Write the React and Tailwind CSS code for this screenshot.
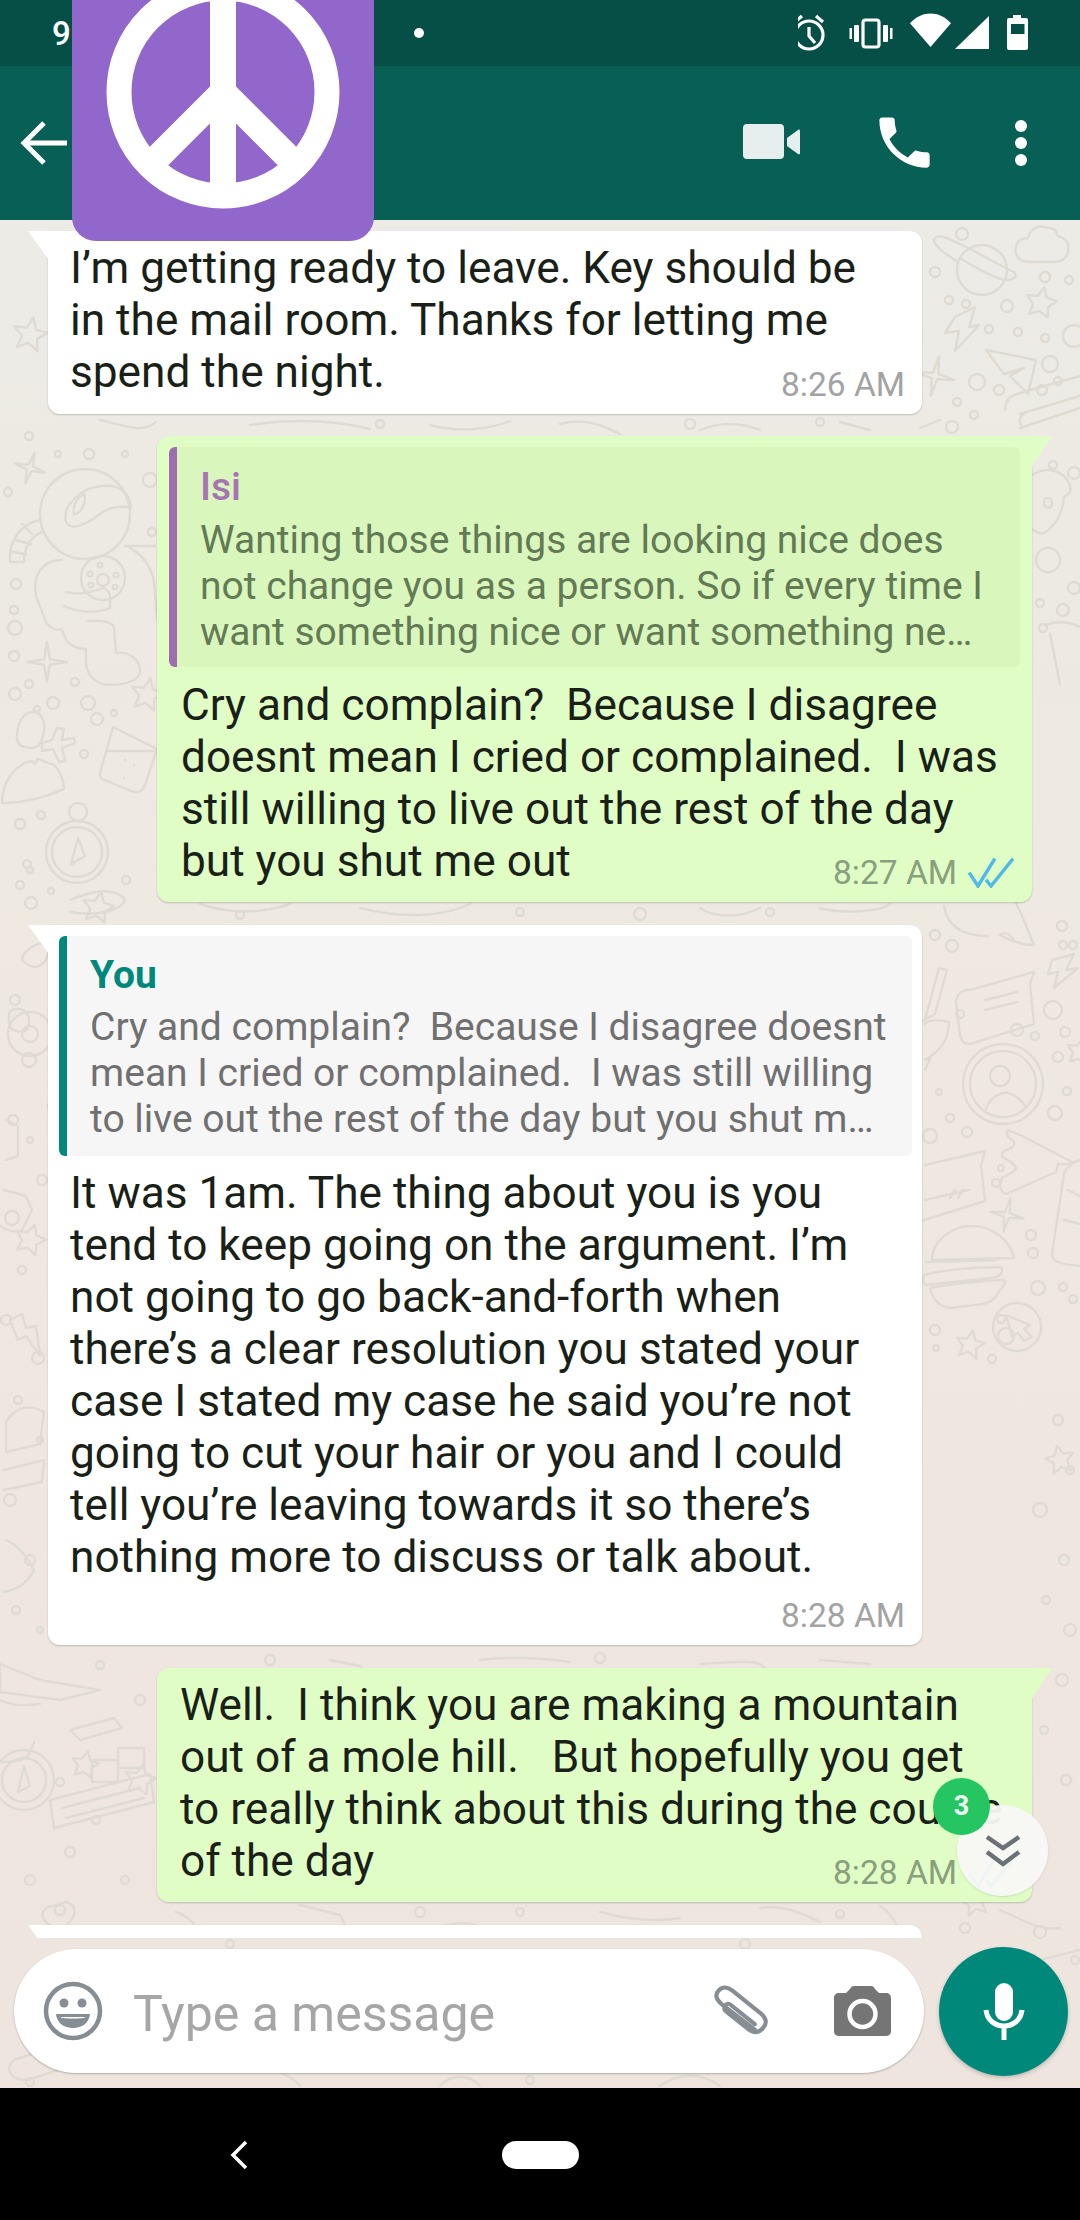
import React from "react";

const starPts = (cx, cy, R, r, n, rot = 0) => {
  const p = [];
  for (let i = 0; i < n * 2; i++) {
    const a = rot + (Math.PI * i) / n - Math.PI / 2;
    const q = i % 2 ? r : R;
    p.push(`${(cx + q * Math.cos(a)).toFixed(1)},${(cy + q * Math.sin(a)).toFixed(1)}`);
  }
  return p.join(" ");
};

const dots = [
  [29,436,4],[58,454,3],[89,454,5],[125,454,3],[8,492,4],[150,480,7],[152,532,4],[16,584,5],[14,610,4],[15,628,7],[14,656,5],
  [29,684,4],[15,694,6],[75,682,4],[53,703,6],[37,709,3],[88,703,7],[97,719,6],[114,713,3],[84,754,4],[20,824,5],[41,815,4],[27,864,4],[30,870,3],[20,885,4],[51,891,3],[31,903,6],[126,880,4],
  [935,272,5],[962,234,6],[1045,277,5],[1069,280,4],[949,300,4],[966,304,4],[1007,306,6],[989,329,4],[1018,332,4],[1045,338,4],[1074,336,11],[977,382,8],[999,390,5],[1050,364,8],[1058,381,4],[1042,390,5],[957,402,4],[974,415,4],[952,427,6],
  [1053,465,4],[1074,473,6],[1074,588,6],[1040,603,4],[1063,610,6],[1043,628,4],
  [935,935,5],[952,946,6],[1062,926,5],[1073,945,4],[1063,945,4],[960,1014,4],[1053,1010,9],[1017,1030,6],[1035,1036,4],[1065,1032,5],[1058,1057,5],[1067,1091,4],[1055,1113,7],[930,1136,7],[939,1092,3],[950,1118,4],[967,1132,5],[1001,1168,3],[996,1183,4],
  [1031,1235,5],[1033,1253,5],[1038,1288,7],[1063,1287,4],[1073,1299,4],[935,1330,5],[936,1348,3],[1001,1319,4],[1006,1336,8],[992,1359,4],
  [15,1000,5],[29,1060,7],[52,1106,4],[13,1120,5],[30,1140,3],[42,1180,5],[12,1218,7],[22,1270,4],[6,1320,5],[38,1358,6],[18,1400,4],[40,1440,3],[10,1500,6],[30,1560,5],[16,1610,4],[40,1630,3],
  [1058,1420,5],[1070,1470,4],[1040,1510,7],[1064,1560,5],[1046,1600,4],[1070,1630,6],[1062,1680,6],[1044,1730,4],[1066,1780,5],
  [100,1665,4],[270,1660,5],[420,1912,5],[600,1658,5],[840,1914,4],[520,1912,4],[60,1910,5],[140,1700,5],[60,1782,4],[96,1820,4],[70,1852,5],[30,1880,5],[125,1880,4],
  [380,424,4],[690,424,5],[820,422,4],[240,915,4],[520,912,4],[640,914,6],[770,912,4],[1040,1932,6],[965,1928,5],[1075,1960,4],[1042,2035,4],[30,2082,4],[530,2080,4],[230,1944,4],[745,1944,5],
];

function Doodles() {
  return (
    <svg className="absolute left-0 top-0" width="1080" height="1868" viewBox="0 220 1080 1868" fill="none" stroke="#dfdbd3" strokeWidth="2.4" strokeLinejoin="round" strokeLinecap="round">
      {dots.map(([x, y, r], i) => <circle key={i} cx={x} cy={y} r={r} />)}
      {/* astronaut */}
      <circle cx="85" cy="514" r="45" />
      <path d="M66 522c-4-16 14-34 36-36 16-2 28 6 29 22-12-3-24 0-34 8-9 7-26 16-31 6z" />
      <path d="M74 514c-2-8 4-18 10-20 3 8-3 20-10 20z" />
      <path d="M40 520c-20 4-32 22-30 42l14 0c0-16 8-26 18-30M15 540l16 4M12 552l14 2M22 524l10 10" />
      <circle cx="103" cy="578" r="22" />
      <circle cx="103" cy="580" r="6" /><circle cx="90" cy="574" r="2.4" /><circle cx="100" cy="565" r="2.4" /><circle cx="116" cy="575" r="2.4" /><circle cx="115" cy="587" r="2.4" /><circle cx="91" cy="585" r="2.4" />
      <path d="M62 560c-20 0-30 16-26 36l10 26c4 6 10 9 16 7 4 20 20 20 24 20l0 12c0 14 10 24 24 24 18 0 30-6 30-14 0-12-12-20-24-18l-2-26c-4-8-20-6-26-6M66 592c16 4 30-2 38-4 8 4 6 12 6 20-14 6-34 4-46-2" />
      <path d="M130 548c12 6 22 20 24 34 2 18 2 36 4 40M125 546h30" />
      {/* 4 point stars */}
      <polygon points={starPts(47,662,20,4,4)} />
      <polygon points={starPts(30,468,16,3.5,4,0.3)} />
      <polygon points={starPts(106,228,18,4,4,0.3)} />
      <polygon points={starPts(935,376,20,4,4,0.2)} />
      <polygon points={starPts(1007,1215,17,3.5,4,0.2)} />
      {/* 5 stars */}
      <polygon points={starPts(147,695,17,8,5,0.2)} />
      <polygon points={starPts(1041,303,16,8,5,0.2)} />
      <polygon points={starPts(98,908,16,8,5,0.2)} />
      <polygon points={starPts(970,1345,15,7,5,0.2)} />
      <polygon points={starPts(1080,1052,14,7,5,0.2)} />
      <polygon points={starPts(30,1240,16,8,5,0.3)} />
      <polygon points={starPts(1060,1460,15,7,5,-0.2)} />
      <polygon points={starPts(140,1780,16,8,5,0.2)} />
      <polygon points={starPts(975,1902,15,7,5,-0.2)} />
      <polygon points={starPts(30,335,18,8,5,0.2)} />
      {/* plus */}
      <path d="M42 743l10-3 5-12 7 1-2 11 12-2 1 5-13 5 3 13-6 1-6-13-11 2z" />
      {/* person */}
      <path d="M17 738c0-18 8-26 16-26 8 0 14 10 10 24-2 8-6 12-11 12-8 0-15-2-15-10zM2 803c0-20 10-32 22-40l8-2c4 4 2 4 6-2l16 6c6 6 10 16 10 24-18 8-40 14-62 14z" />
      {/* glass */}
      <path d="M113 727l44 22-12 36c-3 8-8 8-14 6l-24-10c-6-2-8-4-7-8zM108 751l46 0M125 760h.1M134 765h.1M124 778h.1" />
      {/* compass */}
      <circle cx="77" cy="852" r="31" /><circle cx="77" cy="852" r="25" /><circle cx="78" cy="812" r="9" />
      <path d="M71 864l7-26 7 18zM72 864l13-8" />
      {/* planet */}
      <circle cx="982" cy="270" r="25" />
      <path d="M958 262c-16-10-24-18-24-22 2-6 10-4 26 4 18 8 40 22 54 28 4 4 0 8-8 8-6 0-24-8-46-22z" />
      {/* cloud */}
      <path d="M1030 262c-12 0-16-8-14-16 2-6 6-8 12-8 2-10 12-14 20-10 6 0 8 2 10 8 8 2 12 8 10 16-2 8-8 10-14 10z" />
      {/* bolts */}
      <path d="M955 317l20-10 -6 20 10-2-24 26 4-20-14 2z" />
      <path d="M1052 960l22-6-8 16 12-2-24 20 4-16-10 2z" />
      <path d="M10 1320l12-6 4 14 10-2 4 30-14-20-8 4z" />
      {/* paper plane */}
      <path d="M986 350l50 10-8 34-18-18 14-8-20 6z" />
      {/* ticket / cards */}
      <path d="M1005 410c0-8 4-14 12-16l63-18M1020 428l60-20M1020 414l60-18M1022 428c-4-8-2-12 2-14" />
      <path d="M970 990l64-18-4 12 4 40-64 20c-6 0-8-2-10-8l-4-34c0-6 4-10 10-12zM985 1000l32-8M985 1010l32-8" />
      <path d="M925 1165l60-14-4 14 4 36-64 20M925 1200l44-10M950 1198l5-8M958 1198l5-8" />
      {/* bear */}
      <path d="M1032 475c16-10 32-4 38 10 2 6-2 10-6 12-2 20-10 30-20 36-6 2-8-2-12-4M1044 500c4-4 8-2 8 4 0 4-6 6-8 0z" />
      <circle cx="1048" cy="560" r="12" />
      {/* cup */}
      <path d="M1045 625c10-4 24-4 35 2M1050 634l10 50" />
      {/* rocket fragment */}
      <path d="M944 906c4 24 24 30 44 30M1000 935c14 8 24 10 34 10l-14-34c-4-6-4 -8-4-10M1000 935c6-4 12 0 14 6" />
      <path d="M925 1020l14-52 8 2-12 44-14 8zM925 1060c10-6 24-16 24-38-14-4-24 0-24 2M925 1070l6-14" />
      {/* profile */}
      <circle cx="1003" cy="1084" r="40" /><circle cx="1003" cy="1084" r="33" /><circle cx="1000" cy="1076" r="10" />
      <path d="M985 1112c4-16 18-22 26-18 6 2 12 8 14 12" />
      {/* splash bottle */}
      <path d="M1022 1136l50 26c-4 4-12 2-14 2l-2 8-50 22c-8-4-6-10-4-16 4-4 12-4 14-10-4-10-16-8-14-14 2-6 14-4 12-12-2-4-10-4-6-12z" />
      <path d="M1080 1160c-8 2-14 8-16 14l-12 80c0 8 8 10 28 12M1068 1190l12 6M1064 1220l16 4" />
      {/* burger */}
      <path d="M932 1260c0-20 20-34 40-34s38 14 42 32zM926 1262l70-2M924 1275c20-6 60-8 76-8 4 2 2 8-4 10-24 4-60 6-70 8-4-2-4-6-2-10zM930 1288c20-4 60-8 74-8 2 2 0 6-4 10-4 8-8 12-18 14l-32 4c-12-2-18-10-20-20z" />
      {/* arrow button */}
      <circle cx="1017" cy="1327" r="24" />
      <path d="M1006 1315l24 10-6 4 8 8-8 4-6-8-6 4z" />
      {/* lower-left doodles */}
      <path d="M22 960c0-10 20-22 28-14l-4 14c-6 8-14 10-24 0zM12 1010c12-4 20 4 16 18-4 6-16 4-18-2-2-6-2-14 2-16z" />
      <circle cx="30" cy="1034" r="22" /><circle cx="30" cy="1034" r="8" />
      <path d="M4 1190l22 6 6 14 -10 20c-10 4-22-2-24-8M6 1120l12 6 0 30-12 4" />
      <path d="M6 1422c10-16 24-18 38-10l-4 32-34 8zM4 1470l40-10 -2 22-38 8" />
      <path d="M6 1540c14 6 24 22 28 30 -8 16-20 20-30 22" />
      <path d="M0 1664l40 16 60 10-40 10-60-8z" />
      <path d="M34 1742c-6 18-8 20-34 20M0 1700c12 6 26 6 40 4" />
      <circle cx="24" cy="1780" r="30" /><circle cx="24" cy="1780" r="22" /><path d="M18 1792l6-26 6 20z" />
      <path d="M70 1730l44-12 8 10-42 12 -8-8zM50 1800l100-26 4 28-100 26zM62 1808l78-20M66 1818l78-20" />
      <path d="M92 1760l26 0 0 22-26 0zM118 1748h26v20h-26z" />
      <polygon points={starPts(85,1765,14,7,5,0.2)} />
      <path d="M60 1930c-16-6-22-14-14-22l20-6c14 4 10 18 -6 28zM14 2060l30-10c16-4 26 8 14 20l-30 10c-18 0-24-10-14-20z" />
      <path d="M330 1660l30 6 20 30M480 1660c30-4 60-2 90 2M700 1664c30-2 50-4 60 0 6 4 6 8 2 12M820 1660l50 4M1000 1910c20 8 40 22 60 18M1040 1960l40-10M985 2040c20 18 60 8 70-6-10-22-50-18-70 6zM1020 2030c-20-2-34-10-40-24" />
      <path d="M300 1905l40 10 10 20M420 1935c30-14 50-16 70-4M600 1912c30 8 60 10 80 6M760 1908c20-4 40 4 60 14M880 1906c10 6 20 20 18 30" />
      <path d="M200 1936c-4-10-10-20-24-24M100 420c30 6 40 14 56 2M250 425c40-6 80-6 120 4M430 425c30 8 60 4 80-4M560 424c24-6 40 0 60 10M700 430c20-8 40-8 60 0M840 422l30 8M920 428l20-8" />
      <path d="M70 900c20-8 40-14 54-2 4 8-20 20-54 14M200 904c30 10 60 10 90 0M360 908c40 10 80 10 110-4M700 908c14 10 40 10 60 0M820 908c20 6 60 4 70-4" />
      <path d="M230 2070c40-6 60 4 70 16M440 2086c10-12 30-12 40 0M660 2086c20-14 40-14 60 0" />
    </svg>
  );
}

function Tail({ side }) {
  return side === "in" ? (
    <svg className="absolute -left-[20px] top-0" width="21" height="30" viewBox="0 0 21 30"><polygon points="0,0 21,0 21,29" fill="#fff" /></svg>
  ) : (
    <svg className="absolute -right-[20px] top-0" width="21" height="32" viewBox="0 0 21 32"><polygon points="0,0 21,0 0,32" fill="#e0fdc6" /></svg>
  );
}

function Checks({ className }) {
  return (
    <svg className={className} width="46" height="30" viewBox="0 0 46 30" fill="none" stroke="#4fb9e8" strokeWidth="3.4" strokeLinecap="square">
      <path d="M2 16l8 12L26 2" /><path d="M19 23l4 5L44 2" />
    </svg>
  );
}

const Lines = ({ lines, className }) => (
  <div className={className}>
    {lines.map((l, i) => <div key={i} className="whitespace-pre">{l}</div>)}
  </div>
);

function Incoming({ children, time, className = "" }) {
  return (
    <div className={`relative ml-[48px] w-[874px] rounded-b-[12px] rounded-tr-[12px] bg-white shadow-[0_1px_2px_rgba(0,0,0,0.2)] ${className}`}>
      <Tail side="in" />
      {children}
      {time && <div className="absolute bottom-[10px] right-[17px] text-[33.5px] leading-[38px] text-[#a3a3a3]">{time}</div>}
    </div>
  );
}

function Outgoing({ children, time, className = "" }) {
  return (
    <div className={`relative ml-[157px] w-[875px] rounded-b-[12px] rounded-tl-[12px] bg-[#e0fdc6] shadow-[0_1px_2px_rgba(0,0,0,0.2)] ${className}`}>
      <Tail side="out" />
      {children}
      <div className="absolute bottom-[10px] right-[75px] text-[33.5px] leading-[38px] text-[#8a9f7d]">{time}</div>
      <Checks className="absolute bottom-[14px] right-[18px]" />
    </div>
  );
}

function Peace() {
  return (
    <svg className="absolute left-[72px] top-0 z-10" width="302" height="241" viewBox="72 0 302 241">
      <path d="M72 0h302v217a24 24 0 0 1-24 24H96a24 24 0 0 1-24-24z" fill="#9267cb" />
      <circle cx="223" cy="92" r="104" fill="none" stroke="#fff" strokeWidth="25" />
      <path d="M223 -15V196M223 92L149 166M223 92L297 166" stroke="#fff" strokeWidth="26" fill="none" />
    </svg>
  );
}

export default function App() {
  const mainText = "text-[44.2px] leading-[52px] text-[#1a1f18]";
  return (
    <div className="relative flex h-[2220px] w-[1080px] flex-col overflow-hidden bg-black font-['Roboto',sans-serif]">
      <Peace />
      <div className="flex h-[66px] shrink-0 items-center bg-[#064f47] text-white">
        <span className="ml-[52px] text-[33px] font-medium leading-none">9</span>
        <span className="ml-[343px] h-[10px] w-[10px] rounded-full bg-white" />
        <svg className="ml-auto mr-[50px]" width="232" height="44" viewBox="0 0 232 44" fill="none">
          <g stroke="#fff" strokeWidth="3.2">
            <circle cx="11" cy="24" r="14" />
            <path d="M11 15v9l6 7M-3 10l7-6M25 10l-7-6" transform="translate(0 1)" />
            <rect x="65" y="9" width="16" height="27" rx="2.5" />
          </g>
          <g fill="#fff">
            <rect x="56" y="14" width="5" height="17" rx="1" />
            <rect x="51.5" y="17" width="2.5" height="11" />
            <rect x="85" y="14" width="5" height="17" rx="1" />
            <rect x="92" y="17" width="2.5" height="11" />
            <path d="M112 16c12-12 29-12 41 0l-20.500 22z" transform="translate(0 -5) scale(1 1.08)" />
            <path d="M191 5v33h-34z" />
            <path d="M215 4h8v3h5a2 2 0 0 1 2 2v28a2 2 0 0 1-2 2h-17a2 2 0 0 1-2-2V9a2 2 0 0 1 2-2h4z" />
          </g>
          <rect x="213" y="13" width="13.500" height="10" fill="#064f47" />
        </svg>
      </div>
      <div className="flex h-[154px] shrink-0 items-center bg-[#085f56] shadow-[0_1px_2px_rgba(0,0,0,0.15)]">
        <svg className="ml-[20px] mt-[0px]" width="50" height="46" viewBox="0 0 50 46" fill="none" stroke="#fff" strokeWidth="5"><path d="M47 23H5M24 3L4 23l20 20" /></svg>
        <svg className="ml-[673px] mt-[-2px]" width="58" height="36" viewBox="0 0 58 36" fill="#e6efed"><rect x="0" y="0" width="41" height="35" rx="4" /><path d="M44 14l11-8c1-1 2 0 2 1v22c0 1-1 2-2 1l-11-8z" /></svg>
        <svg className="ml-[70px] mt-[-2px]" width="67" height="67" viewBox="0 0 24 24" fill="#fff"><path d="M6.62 10.790c1.440 2.830 3.760 5.140 6.590 6.590l2.200-2.200c.27-.27.67-.36 1.020-.24 1.120.37 2.330.57 3.570.57.55 0 1 .45 1 1V20c0 .55-.45 1-1 1-9.390 0-17-7.610-17-17 0-.55.45-1 1-1h3.500c.55 0 1 .45 1 1 0 1.250.2 2.450.57 3.570.11.35.03.74-.25 1.020l-2.200 2.200z" /></svg>
        <div className="ml-[77px] mt-[-1px] flex flex-col gap-[5px]">
          <span className="h-[12px] w-[12px] rounded-full bg-white" />
          <span className="h-[12px] w-[12px] rounded-full bg-white" />
          <span className="h-[12px] w-[12px] rounded-full bg-white" />
        </div>
      </div>
      <div className="relative flex h-[1868px] shrink-0 flex-col bg-gradient-to-b from-[#ecebe5] via-[#efe8e0] to-[#eee5de]">
        <Doodles />
        <div className="relative flex h-[1718px] flex-col overflow-hidden pt-[11px]">
          <Incoming time="8:26 AM" className="pb-[16px] pl-[22px] pt-[11px]">
            <Lines className={mainText} lines={["I’m getting ready to leave. Key should be", "in the mail room. Thanks for letting me", "spend the night."]} />
          </Incoming>
          <Outgoing time="8:27 AM" className="mt-[22px] pb-[15px] pt-[11px]">
            <div className="ml-[12px] h-[220px] w-[851px] rounded-[6px] border-l-[8px] border-[#9d6fae] bg-[#d9f7bd] pl-[23px] pt-[16px]">
              <div className="text-[39px] font-medium leading-[48px] text-[#a773b3]">Isi</div>
              <Lines className="mt-[6px] text-[39px] leading-[46px] text-[#637a55]" lines={["Wanting those things are looking nice does", "not change you as a person. So if every time I", "want something nice or want something ne…"]} />
            </div>
            <Lines className={`mt-[12px] pl-[24px] ${mainText}`} lines={["Cry and complain?  Because I disagree", "doesnt mean I cried or complained.  I was", "still willing to live out the rest of the day", "but you shut me out"]} />
          </Outgoing>
          <Incoming time="8:28 AM" className="mt-[23px] pb-[62px] pt-[11px]">
            <div className="ml-[11px] h-[220px] w-[853px] rounded-[6px] border-l-[8px] border-[#00897b] bg-[#f6f6f6] pl-[23px] pt-[15px]">
              <div className="text-[39px] font-bold leading-[48px] text-[#00897b]">You</div>
              <Lines className="mt-[5px] text-[39px] leading-[46px] text-[#707070]" lines={["Cry and complain?  Because I disagree doesnt", "mean I cried or complained.  I was still willing", "to live out the rest of the day but you shut m…"]} />
            </div>
            <Lines className={`mt-[11px] pl-[22px] ${mainText}`} lines={["It was 1am. The thing about you is you", "tend to keep going on the argument. I’m", "not going to go back-and-forth when", "there’s a clear resolution you stated your", "case I stated my case he said you’re not", "going to cut your hair or you and I could", "tell you’re leaving towards it so there’s", "nothing more to discuss or talk about."]} />
          </Incoming>
          <Outgoing time="8:28 AM" className="mt-[23px] pb-[15px] pl-[23px] pt-[11px]">
            <Lines className={mainText} lines={["Well.  I think you are making a mountain", "out of a mole hill.   But hopefully you get", "to really think about this during the course", "of the day"]} />
          </Outgoing>
          <Incoming className="mt-[23px] h-[40px] shrink-0" />
          <div className="absolute left-[957px] top-[1585px] flex h-[91px] w-[91px] items-center justify-center rounded-full bg-[#f8f8f6]/95 shadow-[0_1px_2px_rgba(0,0,0,0.12)]">
            <svg width="36" height="34" viewBox="0 0 36 34" fill="none" stroke="#6c7175" strokeWidth="4.500"><path d="M2 3l16 11L34 3M2 18l16 12 16-12" /></svg>
          </div>
          <div className="absolute left-[933px] top-[1558px] flex h-[57px] w-[57px] items-center justify-center rounded-full bg-[#25c561] text-[27px] font-bold text-[#f0fff5]">3</div>
        </div>
        <div className="relative flex items-start">
          <div className="ml-[14px] mt-[11px] flex h-[124px] w-[910px] items-center rounded-full bg-white shadow-[0_1px_2px_rgba(0,0,0,0.25)]">
            <svg className="ml-[28px]" width="62" height="62" viewBox="0 0 62 62">
              <circle cx="31" cy="31" r="27" fill="none" stroke="#868e93" strokeWidth="4.500" />
              <circle cx="22" cy="23" r="4.500" fill="#868e93" /><circle cx="40" cy="23" r="4.500" fill="#868e93" />
              <path d="M14 34h34c-1 9-8 14-17 14s-16-5-17-14z" fill="#868e93" />
              <path d="M18 37h26c-2 2-24 2-26 0z" fill="#fff" />
            </svg>
            <span className="ml-[29px] mt-[5px] text-[50px] leading-none text-[#a6a6a6]">Type a message</span>
            <svg className="ml-auto" width="60" height="54" viewBox="0 0 60 54" fill="none" stroke="#868e93" strokeWidth="4.500" strokeLinecap="round">
              <path d="M46 47L11 20C4 14 3 9 7 5c4-5 10-4 15 0l31 25c6 5 6 11 2 15-4 5-9 6-15 2L16 28c-3-2-3-5-2-7 2-3 5-2 7 0l25 20" transform="translate(2 2) scale(.93)" />
            </svg>
            <svg className="ml-[64px] mr-[33px]" width="57" height="50" viewBox="0 0 57 50"><path d="M20 0h17c2 0 3 1 4 3l4 4h7c3 0 5 2 5 5v33c0 3-2 5-5 5H5c-3 0-5-2-5-5V12c0-3 2-5 5-5h7l4-4c1-2 2-3 4-3z" fill="#757575" /><circle cx="28.500" cy="28" r="13" fill="none" stroke="#fff" strokeWidth="4.500" /></svg>
          </div>
          <div className="ml-[15px] mt-[9px] flex h-[129px] w-[129px] items-center justify-center rounded-full bg-[#00897b] shadow-[0_2px_4px_rgba(0,0,0,0.2)]">
            <svg width="42" height="58" viewBox="0 0 42 58" fill="none"><rect x="12" y="0" width="18" height="38" rx="9" fill="#fff" /><path d="M3 27c1 10 9 16 18 16s17-6 18-16M21 43v14" stroke="#fff" strokeWidth="5" /></svg>
          </div>
        </div>
      </div>
      <div className="flex flex-1 items-center bg-black">
        <svg className="ml-[229px] mt-[2px]" width="20" height="30" viewBox="0 0 20 30" fill="none" stroke="#fff" strokeWidth="3.500"><path d="M17 2L4 15l13 13" /></svg>
        <span className="ml-[253px] mt-[2px] h-[28px] w-[77px] rounded-full bg-white" />
      </div>
    </div>
  );
}
